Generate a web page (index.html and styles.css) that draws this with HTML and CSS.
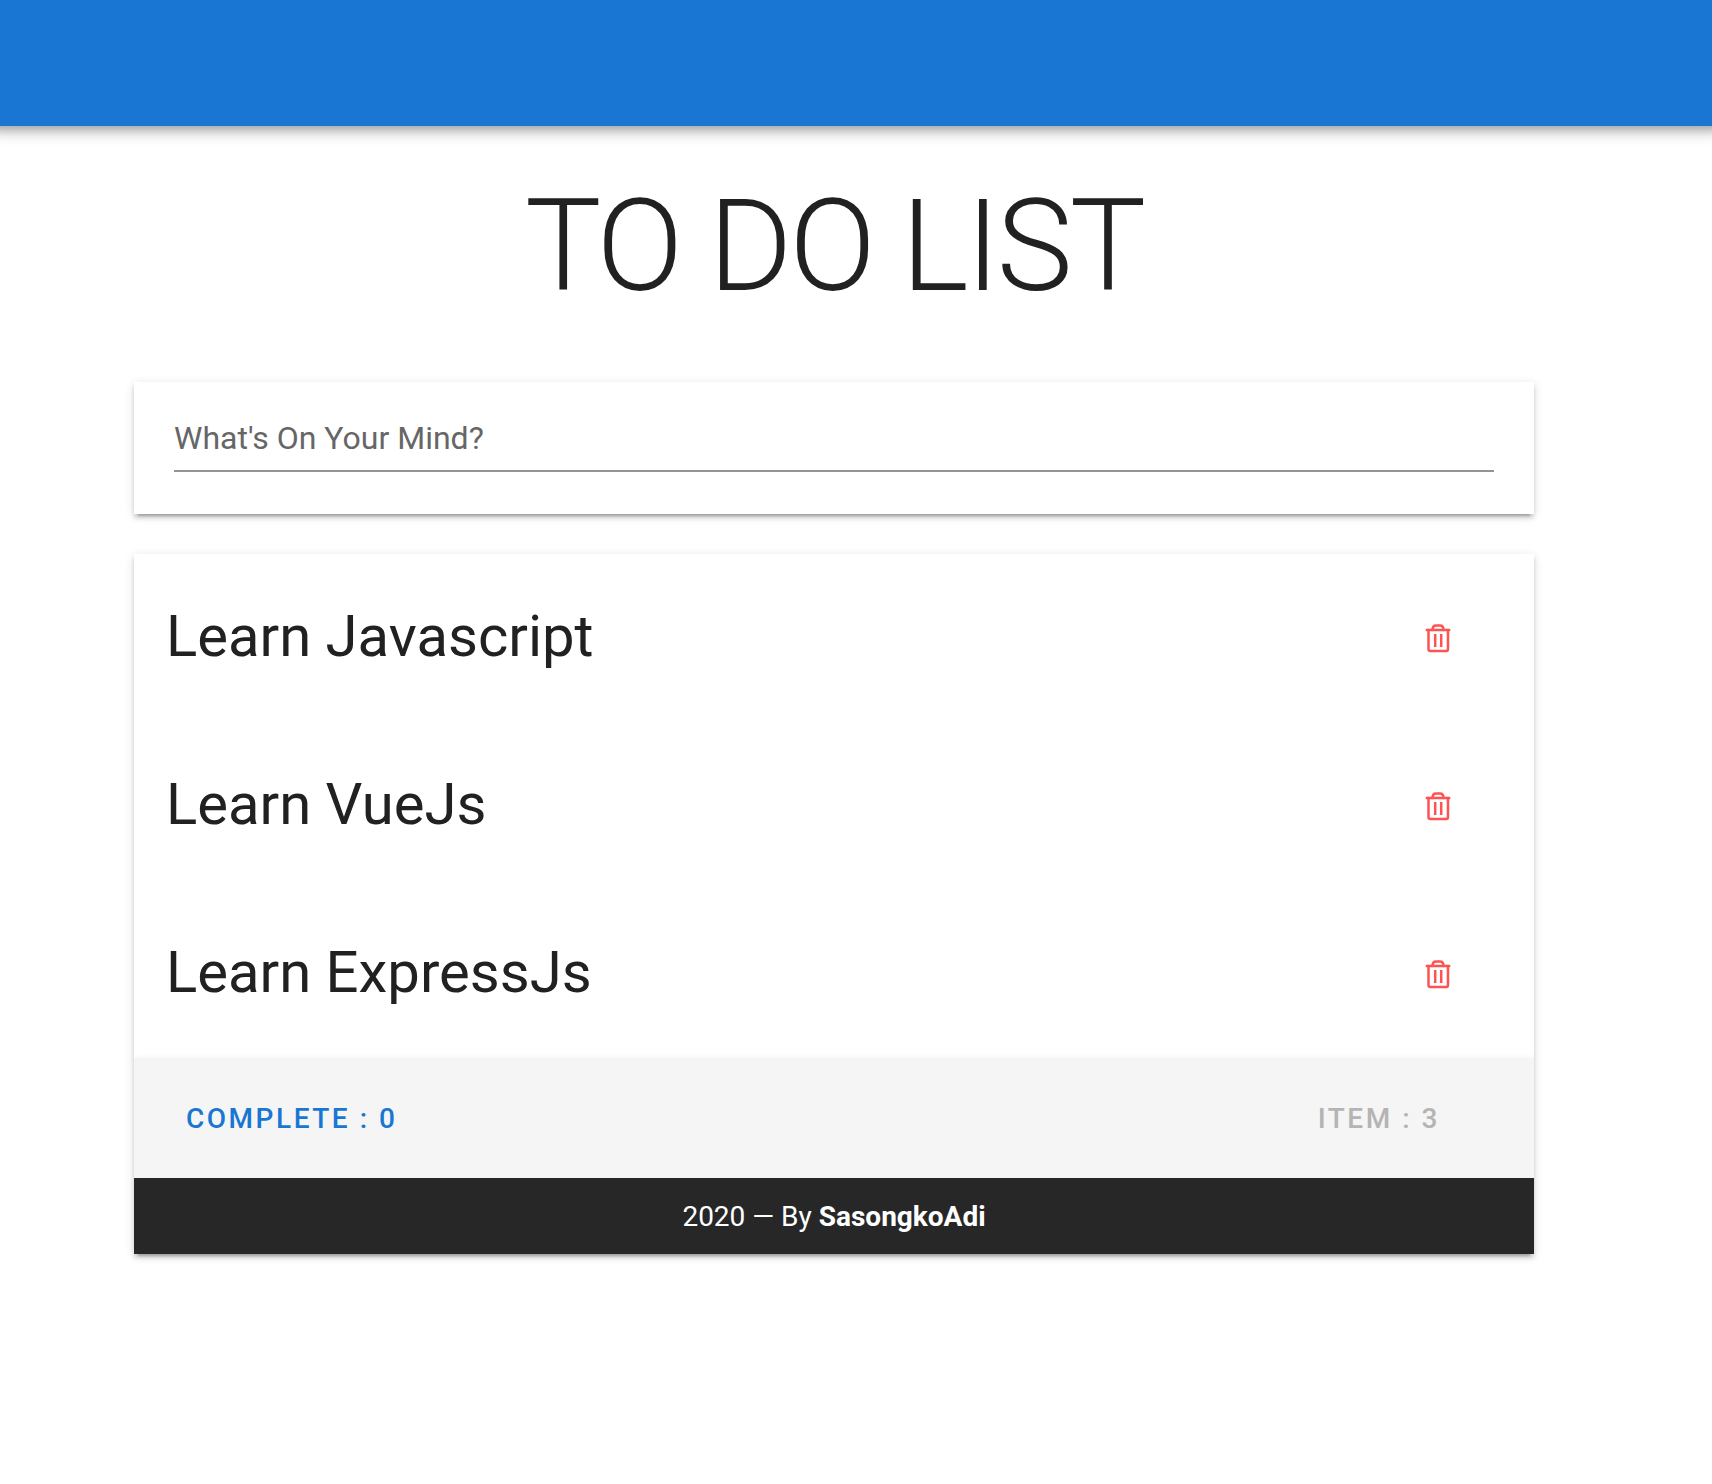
FILE: index.html
```html
<!DOCTYPE html>
<html lang="en">
<head>
<meta charset="utf-8">
<meta name="viewport" content="width=device-width, initial-scale=1">
<title>To Do List</title>
<link rel="stylesheet" href="styles.css">
</head>
<body>
<svg class="sprite" aria-hidden="true">
  <symbol id="trash" viewBox="0 0 32 32">
    <g fill="none" stroke="currentColor" stroke-width="2.500" stroke-linecap="round" stroke-linejoin="round">
      <path d="M4.800 8H27.200"/>
      <path d="M10.500 8C10.500 5 12 3.500 14 3.500H18C20 3.500 21.500 5 21.500 8"/>
      <path d="M6.500 8V27Q6.500 29 8.500 29H24Q26 29 26 27V8"/>
      <path stroke-linecap="butt" d="M13.200 12V25M19.200 12V25"/>
    </g>
  </symbol>
</svg>
<header class="app-bar"></header>
<main class="container">
  <h1 class="title">TO DO LIST</h1>
  <form class="card entry">
    <input class="entry-input" type="text" aria-label="What's On Your Mind?" placeholder="What's On Your Mind?">
  </form>
  <section class="card">
    <ul class="list">
      <li class="item"><span class="item-text">Learn Javascript</span><button class="delete" type="button" aria-label="Delete Learn Javascript"><svg><use href="#trash"/></svg></button></li>
      <li class="item"><span class="item-text">Learn VueJs</span><button class="delete" type="button" aria-label="Delete Learn VueJs"><svg><use href="#trash"/></svg></button></li>
      <li class="item"><span class="item-text">Learn ExpressJs</span><button class="delete" type="button" aria-label="Delete Learn ExpressJs"><svg><use href="#trash"/></svg></button></li>
    </ul>
    <div class="summary">
      <button class="text-button primary" type="button">COMPLETE : 0</button>
      <button class="text-button" type="button" disabled>ITEM : 3</button>
    </div>
    <footer class="footer">2020 — By <strong>SasongkoAdi</strong></footer>
  </section>
</main>
</body>
</html>
```
FILE: styles.css
```css
* { box-sizing: border-box; }

body {
  margin: 0;
  background: #fff;
  color: #212121;
  font-family: Roboto, sans-serif;
}

.sprite { display: none; }

.app-bar {
  height: 126px;
  background: #1976d2;
  box-shadow: 0 -6px 8px 8px rgba(0, 0, 0, .2), 0 0 10px 8px rgba(0, 0, 0, .14), 0 -8px 20px 10px rgba(0, 0, 0, .12);
}

.container { padding: 56px 178px 56px 134px; }

.title {
  margin: 0 0 72px;
  font-size: 128px;
  font-weight: 300;
  line-height: 128px;
  letter-spacing: -3px;
  text-align: center;
}

.card {
  background: #fff;
  box-shadow: 0 6px 2px -4px rgba(0, 0, 0, .2), 0 4px 4px rgba(0, 0, 0, .14), 0 2px 10px rgba(0, 0, 0, .12);
}

.entry {
  margin-bottom: 40px;
  padding: 24px 40px 42px;
}

.entry-input {
  display: block;
  width: 100%;
  height: 66px;
  padding: 0;
  border: 0;
  border-bottom: 2px solid #949494;
  outline: 0;
  background: transparent;
  color: inherit;
  font: 32px Roboto, sans-serif;
}

.entry-input::placeholder { color: #666; opacity: 1; }

.list {
  margin: 0;
  padding: 0;
  list-style: none;
}

.item {
  display: flex;
  align-items: center;
  justify-content: space-between;
  height: 168px;
  padding: 0 80px 0 32px;
  font-size: 58px;
}

.item-text { padding-bottom: 4px; }

.delete {
  display: flex;
  padding: 0;
  border: 0;
  background: transparent;
  color: #ff5252;
  cursor: pointer;
}

.delete svg { width: 32px; height: 32px; }

.summary {
  display: flex;
  align-items: center;
  justify-content: space-between;
  height: 120px;
  padding: 0 94px 0 52px;
  background: #f5f5f5;
  box-shadow: 0 0 6px rgba(0, 0, 0, .06);
  clip-path: inset(-10px 0 0);
}

.text-button {
  padding: 0;
  border: 0;
  background: transparent;
  color: #b4b4b4;
  font: 500 28px Roboto, sans-serif;
  letter-spacing: .09em;
}

.primary { color: #1976d2; }

.footer {
  padding: 19px 18px 17px;
  background: #272727;
  color: #fff;
  font-size: 28px;
  line-height: 40px;
  text-align: center;
}
```
